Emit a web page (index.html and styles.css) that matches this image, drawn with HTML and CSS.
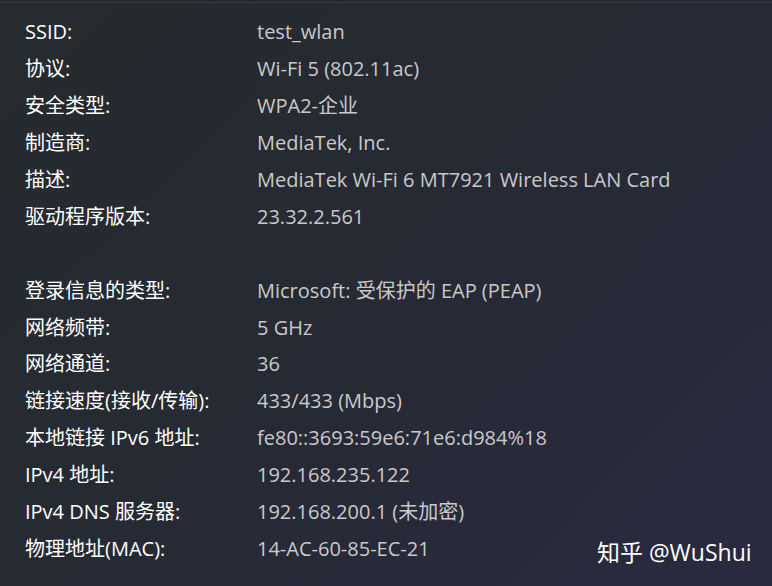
FILE: index.html
```html
<!DOCTYPE html>
<html lang="zh">
<head>
<meta charset="utf-8">
<link rel="stylesheet" href="styles.css">
</head>
<body>
<div class="page">
  <div class="topline"></div>
  <div class="list">
    <div class="row"><span class="k">SSID:</span><span class="v">test_wlan</span></div>
    <div class="row"><span class="k">协议:</span><span class="v">Wi-Fi 5 (802.11ac)</span></div>
    <div class="row"><span class="k">安全类型:</span><span class="v">WPA2-企业</span></div>
    <div class="row"><span class="k">制造商:</span><span class="v">MediaTek, Inc.</span></div>
    <div class="row"><span class="k">描述:</span><span class="v">MediaTek Wi-Fi 6 MT7921 Wireless LAN Card</span></div>
    <div class="row"><span class="k">驱动程序版本:</span><span class="v">23.32.2.561</span></div>
    <div class="row gap"></div>
    <div class="row"><span class="k">登录信息的类型:</span><span class="v">Microsoft: 受保护的 EAP (PEAP)</span></div>
    <div class="row"><span class="k">网络频带:</span><span class="v">5 GHz</span></div>
    <div class="row"><span class="k">网络通道:</span><span class="v">36</span></div>
    <div class="row"><span class="k">链接速度(接收/传输):</span><span class="v">433/433 (Mbps)</span></div>
    <div class="row"><span class="k">本地链接 IPv6 地址:</span><span class="v">fe80::3693:59e6:71e6:d984%18</span></div>
    <div class="row"><span class="k">IPv4 地址:</span><span class="v">192.168.235.122</span></div>
    <div class="row"><span class="k">IPv4 DNS 服务器:</span><span class="v">192.168.200.1 (未加密)</span></div>
    <div class="row"><span class="k">物理地址(MAC):</span><span class="v">14-AC-60-85-EC-21</span></div>
  </div>
  <div class="mark">知乎 @WuShui</div>
</div>
</body>
</html>
```
FILE: styles.css
```css
html, body {
  margin: 0;
  padding: 0;
}
body {
  width: 772px;
  height: 586px;
  overflow: hidden;
  font-family: "Open Sans", "Noto Sans CJK SC", sans-serif;
}
.page {
  position: relative;
  width: 772px;
  height: 586px;
  background: linear-gradient(135deg, #262b2e 0%, #262a33 45%, #2a2a40 100%);
}
.topline {
  height: 2px;
  border-bottom: 1px solid #363b40;
}
.list {
  display: flex;
  flex-direction: column;
  padding: 11px 0 0 25px;
}
.row {
  display: flex;
  height: 36.9px;
  align-items: center;
  font-size: 20px;
  line-height: 1;
}
.k {
  width: 232px;
  color: #ffffff;
}
.v {
  color: #c9c9cb;
}
.mark {
  position: absolute;
  left: 597px;
  top: 536px;
  font-size: 23px;
  line-height: 32px;
  color: #ffffff;
}
```
